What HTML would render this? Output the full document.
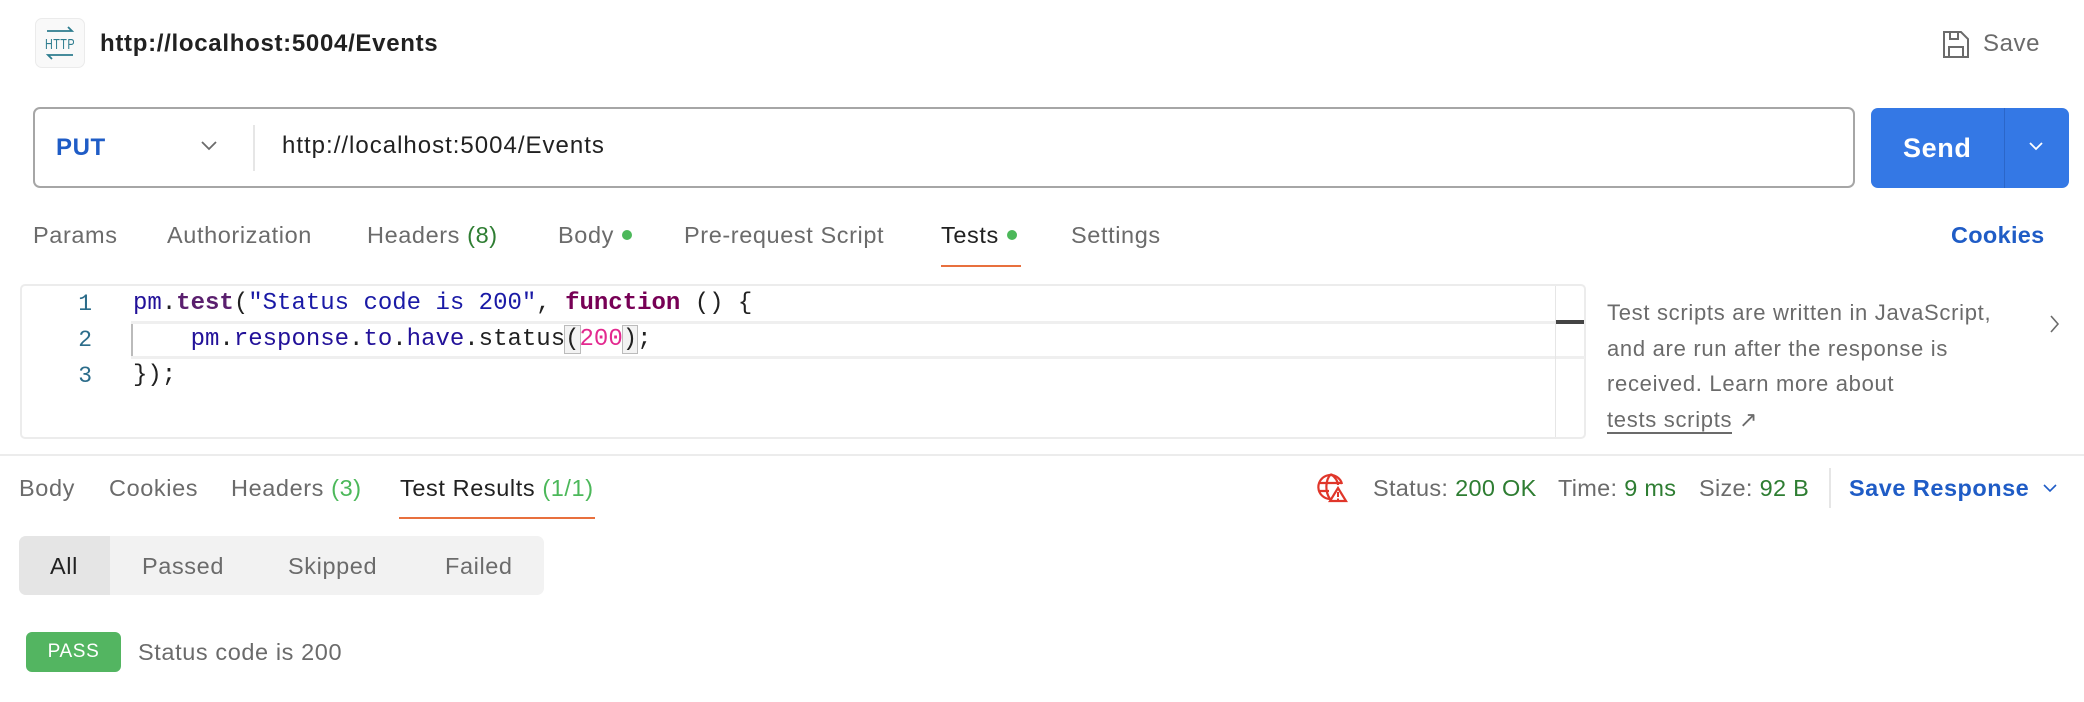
<!DOCTYPE html>
<html><head><meta charset="utf-8"><style>
*{margin:0;padding:0;box-sizing:border-box}
body{width:2084px;height:702px;background:#fff;font-family:"Liberation Sans",sans-serif;position:relative;overflow:hidden;color:#6b6b6b;letter-spacing:0.6px}
.a{position:absolute;white-space:nowrap}
.t{font-size:23.5px;line-height:26px}
.g{color:#2e7d32}.lg{color:#4cb85a}
.dot{display:inline-block;width:10px;height:10px;border-radius:50%;background:#4cb85a;vertical-align:middle;margin-left:8px;position:relative;top:-2px}
.code{font-family:"Liberation Mono",monospace;font-size:24px;line-height:26px;color:#212121;white-space:pre;letter-spacing:0}
.ln{font-family:"Liberation Mono",monospace;font-size:23px;color:#2b6c8a;width:30px;text-align:right;letter-spacing:0}
</style></head><body>
<div class="a" style="left:35px;top:18px;width:50px;height:50px;border:1.5px solid #ebebeb;border-radius:7px;background:#f9f9f9"></div>
<svg class="a" style="left:42px;top:25px" width="36" height="36" viewBox="0 0 36 36"><path d="M5 6H30L26 2M31 30H6L10 34" fill="none" stroke="#2e7d8f" stroke-width="1.8"/><text x="18" y="24" font-family="Liberation Sans Narrow,Liberation Sans,sans-serif" font-size="15" fill="#2e7d8f" text-anchor="middle" textLength="30" lengthAdjust="spacingAndGlyphs">HTTP</text></svg>
<div class="a" style="left:100px;top:30px;font-size:24px;font-weight:bold;color:#212121;letter-spacing:0.7px">http://localhost:5004/Events</div>
<svg class="a" style="left:1942px;top:30px" width="28" height="29" viewBox="0 0 28 29"><path d="M2 2H19L26 9V27H2Z M8 2V9H16V2 M7 27V17H21V27" fill="none" stroke="#6b6b6b" stroke-width="2"/></svg>
<div class="a" style="left:1983px;top:30px;font-size:24px;color:#6b6b6b">Save</div>

<div class="a" style="left:33px;top:107px;width:1822px;height:81px;border:2px solid #a6a6a6;border-radius:7px"></div>
<div class="a" style="left:56px;top:134px;font-size:24px;font-weight:bold;color:#1f5cc6">PUT</div>
<svg class="a" style="left:200px;top:140px" width="18" height="12"><path d="M2 2L9 9L16 2" fill="none" stroke="#6b6b6b" stroke-width="1.8"/></svg>
<div class="a" style="left:253px;top:125px;width:2px;height:46px;background:#e6e6e6"></div>
<div class="a" style="left:282px;top:132px;font-size:24px;color:#212121;letter-spacing:1px">http://localhost:5004/Events</div>
<div class="a" style="left:1871px;top:108px;width:198px;height:80px;background:#3478e5;border-radius:7px"></div>
<div class="a" style="left:2004px;top:108px;width:1px;height:80px;background:#2b66c9"></div>
<div class="a" style="left:1903px;top:133px;font-size:27px;font-weight:bold;color:#fff">Send</div>
<svg class="a" style="left:2028px;top:141px" width="16" height="11"><path d="M2 2L8 8L14 2" fill="none" stroke="#fff" stroke-width="1.8"/></svg>

<div class="a t" style="left:33px;top:222px">Params</div>
<div class="a t" style="left:167px;top:222px">Authorization</div>
<div class="a t" style="left:367px;top:222px">Headers <span class="g">(8)</span></div>
<div class="a t" style="left:558px;top:222px">Body<span class="dot"></span></div>
<div class="a t" style="left:684px;top:222px">Pre-request Script</div>
<div class="a t" style="left:941px;top:222px;color:#212121">Tests<span class="dot"></span></div>
<div class="a" style="left:941px;top:265px;width:80px;height:2px;background:#e8703e"></div>
<div class="a t" style="left:1071px;top:222px">Settings</div>
<div class="a t" style="left:1951px;top:222px;color:#1f5cc6;font-weight:bold;letter-spacing:0.3px">Cookies</div>

<div class="a" style="left:20px;top:284px;width:1566px;height:155px;border:2px solid #ececec;border-radius:5px"></div>
<div class="a" style="left:131px;top:321px;width:1454px;height:38px;border-top:3px solid #efefef;border-bottom:3px solid #efefef"></div>
<div class="a" style="left:131px;top:324px;width:2px;height:32px;background:#bbb"></div>
<div class="a" style="left:1555px;top:286px;width:1px;height:151px;background:#e6e6e6"></div>
<div class="a" style="left:1556px;top:320px;width:28px;height:4px;background:#444"></div>
<div class="a ln" style="left:62px;top:291px">1</div>
<div class="a ln" style="left:62px;top:327px">2</div>
<div class="a ln" style="left:62px;top:363px">3</div>
<div class="a code" style="left:133px;top:291px"><span style="color:#221199">pm</span>.<span style="color:#5a1f6e;font-weight:bold">test</span>(<span style="color:#1a1aa6">"Status code is 200"</span>, <span style="color:#770055;font-weight:bold">function</span> () {</div>
<div class="a code" style="left:133px;top:327px">    <span style="color:#221199">pm</span>.<span style="color:#221199">response</span>.<span style="color:#221199">to</span>.<span style="color:#221199">have</span>.status<span style="outline:1.5px solid #bbb;background:#f3f3f3">(</span><span style="color:#e3298f">200</span><span style="outline:1.5px solid #bbb;background:#f3f3f3">)</span>;</div>
<div class="a code" style="left:133px;top:363px">});</div>

<div class="a" style="left:1607px;top:295px;font-size:22px;line-height:35.5px;color:#6b6b6b;letter-spacing:0.7px">Test scripts are written in JavaScript,<br>and are run after the response is<br>received. Learn more about<br><span style="border-bottom:2px solid #6b6b6b">tests scripts</span> ↗</div>
<svg class="a" style="left:2049px;top:314px" width="12" height="20"><path d="M2 2L9 10L2 18" fill="none" stroke="#6b6b6b" stroke-width="1.6"/></svg>

<div class="a" style="left:0;top:454px;width:2084px;height:2px;background:#ececec"></div>
<div class="a t" style="left:19px;top:475px">Body</div>
<div class="a t" style="left:109px;top:475px">Cookies</div>
<div class="a t" style="left:231px;top:475px">Headers <span class="lg">(3)</span></div>
<div class="a t" style="left:400px;top:475px;color:#212121">Test Results <span class="lg">(1/1)</span></div>
<div class="a" style="left:399px;top:517px;width:196px;height:2px;background:#e8703e"></div>

<svg class="a" style="left:1317px;top:472px" width="32" height="32" viewBox="0 0 32 32"><g fill="none" stroke="#e0362a" stroke-width="2.2"><path d="M25 12A12 12 0 1 0 13 27"/><path d="M14 2C8 8 8 20 13 27M14 2C19 6 21 10 21 13M2 11H25M3 19H12"/><path d="M21 16L29 29H13Z"/></g><path d="M21 20V25M21 26.5V28" stroke="#e0362a" stroke-width="2"/></svg>
<div class="a t" style="left:1373px;top:475px;letter-spacing:0.3px">Status: <span class="g">200 OK</span></div>
<div class="a t" style="left:1558px;top:475px;letter-spacing:0.3px">Time: <span class="g">9 ms</span></div>
<div class="a t" style="left:1699px;top:475px;letter-spacing:0.3px">Size: <span class="g">92 B</span></div>
<div class="a" style="left:1829px;top:468px;width:2px;height:40px;background:#e6e6e6"></div>
<div class="a t" style="left:1849px;top:475px;color:#1f5cc6;font-weight:bold;letter-spacing:0.5px">Save Response</div>
<svg class="a" style="left:2042px;top:483px" width="16" height="11"><path d="M2 2L8 8L14 2" fill="none" stroke="#1f5cc6" stroke-width="1.6"/></svg>

<div class="a" style="left:19px;top:536px;width:525px;height:59px;background:#f2f2f2;border-radius:7px;overflow:hidden"><div style="width:91px;height:59px;background:#e5e5e5"></div></div>
<div class="a t" style="left:50px;top:553px;color:#212121">All</div>
<div class="a t" style="left:142px;top:553px">Passed</div>
<div class="a t" style="left:288px;top:553px">Skipped</div>
<div class="a t" style="left:445px;top:553px">Failed</div>

<div class="a" style="left:26px;top:632px;width:95px;height:40px;background:#53b561;border-radius:6px;color:#fff;font-size:19px;line-height:40px;text-align:center">PASS</div>
<div class="a t" style="left:138px;top:639px">Status code is 200</div>
</body></html>
